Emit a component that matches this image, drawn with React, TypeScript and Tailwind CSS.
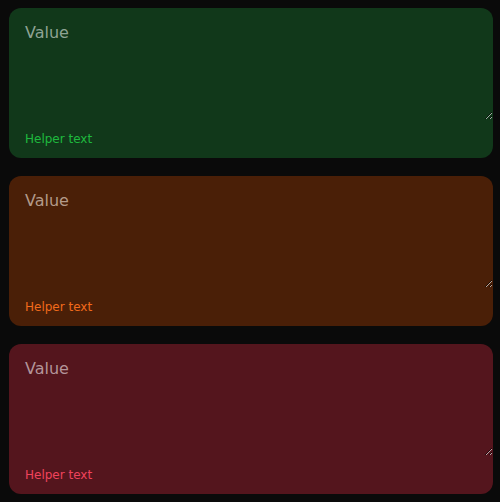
const fields = [
  { card: 'bg-[#11381a]', value: 'placeholder:text-[#8fa394]', helper: 'text-[#1fb83e]' },
  { card: 'bg-[#4a1f07]', value: 'placeholder:text-[#b39a8a]', helper: 'text-[#f26a1b]' },
  { card: 'bg-[#54151d]', value: 'placeholder:text-[#b3949a]', helper: 'text-[#f0435c]' },
];

export default function App() {
  return (
    <div
      className="min-h-[502px] bg-[#0a0a0a] px-[9px] pt-2 flex flex-col gap-[18px]"
      style={{ fontFamily: '"DejaVu Sans", sans-serif' }}
    >
      {fields.map((f, i) => (
        <div key={i} className={`${f.card} rounded-xl h-[150px] w-[484px] flex flex-col overflow-hidden`}>
          <textarea
            placeholder="Value"
            className={`block w-full h-[112px] bg-transparent px-4 pt-[13px] text-[16px] leading-6 text-white outline-none ${f.value}`}
          />
          <div className={`px-4 pt-[11px] text-[12px] leading-4 ${f.helper}`}>Helper text</div>
        </div>
      ))}
    </div>
  );
}
